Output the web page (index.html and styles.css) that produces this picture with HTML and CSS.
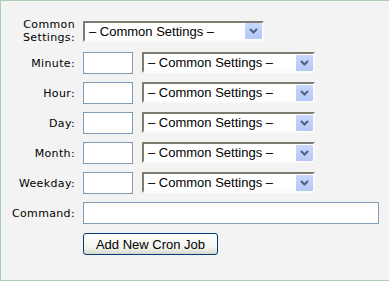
FILE: index.html
```html
<!DOCTYPE html>
<html>
<head>
<meta charset="utf-8">
<link rel="stylesheet" href="styles.css">
</head>
<body>
<div class="panel">
  <div class="form">
    <div class="label two">Common<br>Settings:</div>
    <div class="field">
      <div class="select wide"><span class="sel-text">– Common Settings –</span><span class="sel-btn"><svg width="17" height="16" viewBox="0 0 17 16"><polyline points="5,6 8.5,9.5 12,6" fill="none" stroke="#4d6185" stroke-width="2"/></svg></span></div>
    </div>

    <div class="label">Minute:</div>
    <div class="field">
      <input class="num" type="text">
      <div class="select"><span class="sel-text">– Common Settings –</span><span class="sel-btn"><svg width="17" height="16" viewBox="0 0 17 16"><polyline points="5,6 8.5,9.5 12,6" fill="none" stroke="#4d6185" stroke-width="2"/></svg></span></div>
    </div>

    <div class="label">Hour:</div>
    <div class="field">
      <input class="num" type="text">
      <div class="select"><span class="sel-text">– Common Settings –</span><span class="sel-btn"><svg width="17" height="16" viewBox="0 0 17 16"><polyline points="5,6 8.5,9.5 12,6" fill="none" stroke="#4d6185" stroke-width="2"/></svg></span></div>
    </div>

    <div class="label">Day:</div>
    <div class="field">
      <input class="num" type="text">
      <div class="select"><span class="sel-text">– Common Settings –</span><span class="sel-btn"><svg width="17" height="16" viewBox="0 0 17 16"><polyline points="5,6 8.5,9.5 12,6" fill="none" stroke="#4d6185" stroke-width="2"/></svg></span></div>
    </div>

    <div class="label">Month:</div>
    <div class="field">
      <input class="num" type="text">
      <div class="select"><span class="sel-text">– Common Settings –</span><span class="sel-btn"><svg width="17" height="16" viewBox="0 0 17 16"><polyline points="5,6 8.5,9.5 12,6" fill="none" stroke="#4d6185" stroke-width="2"/></svg></span></div>
    </div>

    <div class="label">Weekday:</div>
    <div class="field">
      <input class="num" type="text">
      <div class="select"><span class="sel-text">– Common Settings –</span><span class="sel-btn"><svg width="17" height="16" viewBox="0 0 17 16"><polyline points="5,6 8.5,9.5 12,6" fill="none" stroke="#4d6185" stroke-width="2"/></svg></span></div>
    </div>

    <div class="label">Command:</div>
    <div class="field">
      <input class="cmd" type="text">
    </div>

    <div class="label"></div>
    <div class="field">
      <button class="btn" type="button">Add New Cron Job</button>
    </div>
  </div>
</div>
</body>
</html>
```

FILE: styles.css
```css
html, body {
  margin: 0;
  padding: 0;
  overflow: hidden;
  background: #f3f3f3;
}

.panel {
  box-sizing: border-box;
  height: 281px;
  border: 1px solid #a6cfb4;
  border-right: none;
  background: #f3f3f3;
  padding-top: 17px;
}

.form {
  display: grid;
  grid-template-columns: 74px 1fr;
  column-gap: 8px;
  row-gap: 8px;
  align-items: center;
}

.label {
  font-family: "DejaVu Sans", Verdana, sans-serif;
  font-size: 11px;
  line-height: 13px;
  letter-spacing: 0.35px;
  color: #000;
  text-align: right;
}

.field {
  display: flex;
  align-items: flex-start;
  gap: 9px;
}

.num, .cmd {
  box-sizing: border-box;
  height: 22px;
  border: 1px solid #7f9db9;
  background: #fff;
  margin: 0;
  padding: 0 3px;
  font-family: "Liberation Sans", Arial, sans-serif;
  font-size: 13px;
  outline: none;
}

.num { width: 50px; }
.cmd { width: 296px; }

.select {
  box-sizing: border-box;
  width: 173px;
  height: 21px;
  display: flex;
  align-items: center;
  background: #fff;
  border-top: 2px solid #7c7c72;
  border-left: 2px solid #7c7c72;
  border-right: 2px solid #fafaf8;
  border-bottom: 2px solid #fafaf8;
  font-family: "Liberation Sans", Arial, sans-serif;
  font-size: 13px;
  color: #000;
}

.select.wide { width: 181px; }

.sel-text {
  flex: 1;
  padding-left: 4px;
  white-space: nowrap;
  overflow: hidden;
}

.sel-btn {
  display: flex;
  width: 17px;
  height: 16px;
  margin-right: 0;
  background: linear-gradient(#c9d8fc, #b4c8f6);
  border-radius: 1px;
}

.sel-btn svg { display: block; }

.btn {
  box-sizing: border-box;
  width: 135px;
  height: 22px;
  margin: 1px 0 0 0;
  padding: 0;
  border: 1px solid #003c74;
  border-radius: 3px;
  background: linear-gradient(#ffffff, #f3f3ee 70%, #d9d7cc);
  font-family: "Liberation Sans", Arial, sans-serif;
  font-size: 13px;
  color: #000;
}
```
